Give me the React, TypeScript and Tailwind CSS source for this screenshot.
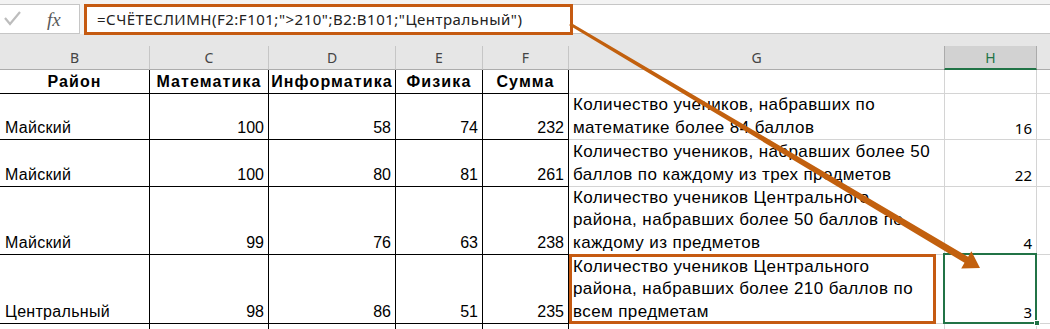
import React from "react";

const COLS = "grid grid-cols-[150px_119px_127px_87px_86px_376px_92px_1fr]";

type Row = {
  h: string;
  b: string;
  c: number;
  d: number;
  e: number;
  f: number;
  g: string[];
  hv: number;
  sel?: boolean;
};

const rows: Row[] = [
  {
    h: "h-[46px]",
    b: "Майский",
    c: 100,
    d: 58,
    e: 74,
    f: 232,
    g: ["Количество учеников, набравших по", "математике более 84 баллов"],
    hv: 16,
  },
  {
    h: "h-[47px]",
    b: "Майский",
    c: 100,
    d: 80,
    e: 81,
    f: 261,
    g: ["Количество учеников, набравших более 50", "баллов по каждому из трех предметов"],
    hv: 22,
  },
  {
    h: "h-[68px]",
    b: "Майский",
    c: 99,
    d: 76,
    e: 63,
    f: 238,
    g: [
      "Количество учеников Центрального",
      "района, набравших более 50 баллов по",
      "каждому из предметов",
    ],
    hv: 4,
  },
  {
    h: "h-[69px]",
    b: "Центральный",
    c: 98,
    d: 86,
    e: 51,
    f: 235,
    g: [
      "Количество учеников Центрального",
      "района, набравших более 210 баллов по",
      "всем предметам",
    ],
    hv: 3,
    sel: true,
  },
];

const blk = "border-r border-b border-black flex items-end leading-[22px]";
const grd = "border-r border-b border-[#d4d4d4] flex items-end leading-[22px]";

export default function App() {
  return (
    <div className="relative w-[1050px] h-[329px] overflow-hidden bg-white font-['Liberation_Sans',Arial,sans-serif] text-[16px] text-black">
      {/* toolbar */}
      <div className="h-[34px] bg-[#f3f3f3] pt-[4px] flex items-start">
        <div className="w-[80px] h-[30px] bg-white border-y border-r border-[#c6c6c6] flex items-center">
          <svg width="24" height="20" viewBox="0 0 24 20" className="ml-[2px]">
            <polyline points="3,9 8,15 18,3" fill="none" stroke="#bdbdbd" strokeWidth="2.2" />
          </svg>
          <span className="ml-[21px] font-['Liberation_Serif',serif] italic text-[19px] text-[#5a5a5a] leading-none">
            fx
          </span>
        </div>
        <div className="w-[4px]" />
        <div className="w-[489px] h-[31px] bg-white border-[3px] border-[#c55a11] flex items-center pl-[10px] font-['Noto_Sans',sans-serif] text-[15px] tracking-[0.5px] text-[#222] whitespace-nowrap">
          =СЧЁТЕСЛИМН(F2:F101;"&gt;210";B2:B101;"Центральный")
        </div>
        <div className="flex-1 h-[30px] bg-white border-y border-[#c6c6c6]" />
      </div>

      {/* column headers */}
      <div className="h-[36px] bg-[#e6e6e6] pt-[12px]">
        <div className={`${COLS} font-['Noto_Sans',sans-serif] text-[14px] text-[#444]`}>
          {["B", "C", "D", "E", "F", "G"].map((l) => (
            <div
              key={l}
              className="h-[24px] border-r border-b border-r-[#c6c6c6] border-b-[#acacac] flex items-center justify-center"
            >
              {l}
            </div>
          ))}
          <div className="h-[24px] bg-[#d2d2d2] border-x border-x-[#ababab] border-b-2 border-b-[#217346] text-[#217346] flex items-center justify-center -ml-px">
            H
          </div>
          <div className="h-[24px] border-b border-[#acacac]" />
        </div>
      </div>

      {/* label row */}
      <div className={COLS}>
        {["Район", "Математика", "Информатика", "Физика", "Сумма"].map((t) => (
          <div key={t} className={`${blk} h-[24px] justify-center font-bold tracking-[1.1px]`}>
            {t}
          </div>
        ))}
        <div className={`${grd} h-[24px]`} />
        <div className={`${grd} h-[24px]`} />
        <div className="border-b border-[#d4d4d4] h-[24px]" />
      </div>

      {rows.map((r, i) => (
        <div key={i} className={COLS}>
          <div className={`${blk} ${r.h} pl-[5px] whitespace-nowrap tracking-[0.3px]`}>{r.b}</div>
          <div className={`${blk} ${r.h} justify-end pr-[4px]`}>{r.c}</div>
          <div className={`${blk} ${r.h} justify-end pr-[4px]`}>{r.d}</div>
          <div className={`${blk} ${r.h} justify-end pr-[4px]`}>{r.e}</div>
          <div className={`${blk} ${r.h} justify-end pr-[4px]`}>{r.f}</div>
          <div className={`${grd} ${r.h} pl-[4px] relative`}>
            <div className="flex flex-col leading-[22.5px] whitespace-nowrap text-[17px] tracking-[0.4px]">
              {r.g.map((line) => (
                <span key={line}>{line}</span>
              ))}
            </div>
            {r.sel && (
              <div className="absolute left-0 top-[-1px] w-[367px] h-[70px] border-[3px] border-[#c55a11]" />
            )}
          </div>
          <div className={`${grd} ${r.h} justify-end pr-[4px] relative font-['Noto_Sans',sans-serif] text-[15px]`}>
            {r.hv}
            {r.sel && (
              <>
                <div className="absolute left-[-2px] top-[-2px] w-[94px] h-[71px] border-2 border-[#217346]" />
                <div className="absolute right-[-4px] bottom-[-3px] w-[6px] h-[6px] bg-[#217346] border border-white" />
              </>
            )}
          </div>
          <div className={`border-b border-[#d4d4d4] ${r.h}`} />
        </div>
      ))}

      {/* partial last row */}
      <div className={COLS}>
        <div className={`${blk} h-[20px]`} />
        <div className={`${blk} h-[20px]`} />
        <div className={`${blk} h-[20px]`} />
        <div className={`${blk} h-[20px]`} />
        <div className={`${blk} h-[20px]`} />
        <div className={`${grd} h-[20px]`} />
        <div className={`${grd} h-[20px]`} />
        <div className="h-[20px]" />
      </div>

      {/* arrow overlay */}
      <svg
        className="absolute left-0 top-0 pointer-events-none"
        width="1050"
        height="329"
        viewBox="0 0 1050 329"
      >
        <polygon
          points="570.8,22.7 968.1,256.8 971.4,251.2 980,268 961.2,268.4 964.5,262.8 569.2,25.3"
          fill="#c2600e"
        />
      </svg>
    </div>
  );
}
